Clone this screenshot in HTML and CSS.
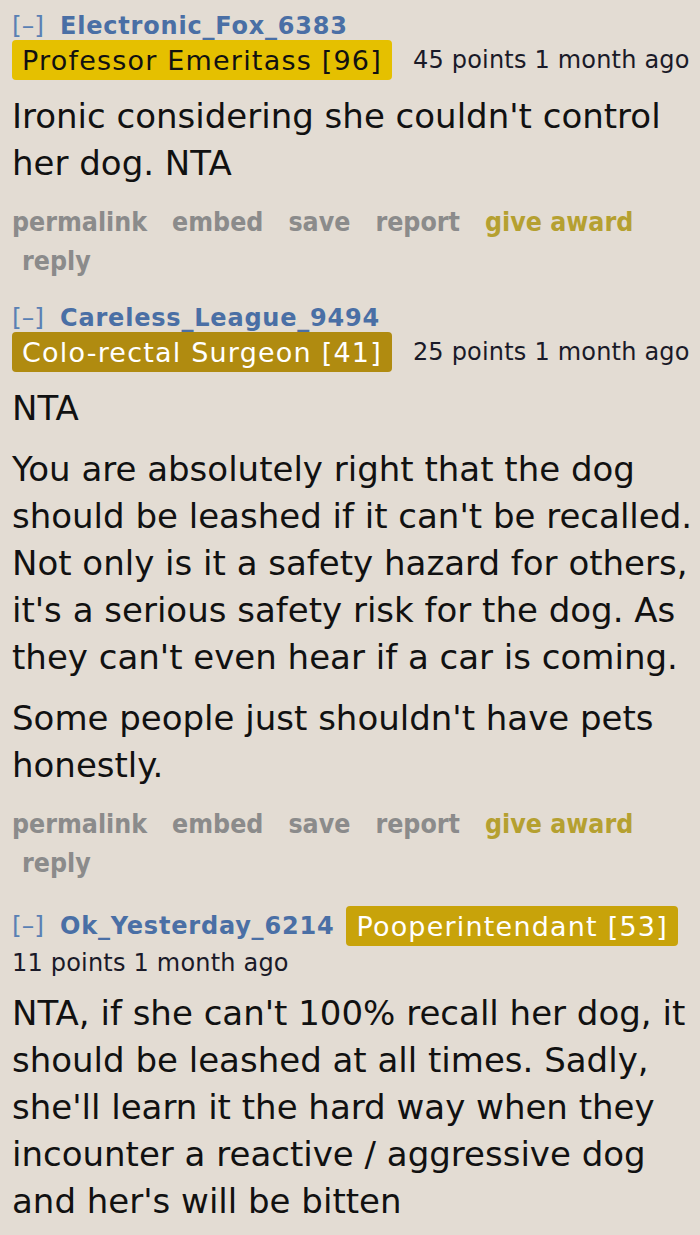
FILE: index.html
```html
<!DOCTYPE html>
<html>
<head>
<meta charset="utf-8">
<link rel="stylesheet" href="styles.css">
</head>
<body>
<div class="comment">
  <div class="tagline">
    <span class="who"><span class="expand">[–]</span><span class="author">Electronic_Fox_6383</span></span>
    <span class="flair flair-yellow">Professor Emeritass [96]</span>
    <span class="score">45 points 1 month ago</span>
  </div>
  <div class="md">
    <p>Ironic considering she couldn't control her dog. NTA</p>
  </div>
  <ul class="buttons">
    <li>permalink</li><li>embed</li><li>save</li><li>report</li><li class="award">give award</li><li class="reply">reply</li>
  </ul>
</div>
<div class="comment">
  <div class="tagline">
    <span class="who"><span class="expand">[–]</span><span class="author">Careless_League_9494</span></span>
    <span class="flair flair-dark">Colo-rectal Surgeon [41]</span>
    <span class="score">25 points 1 month ago</span>
  </div>
  <div class="md">
    <p>NTA</p>
    <p>You are absolutely right that the dog should be leashed if it can't be recalled. Not only is it a safety hazard for others, it's a serious safety risk for the dog. As they can't even hear if a car is coming.</p>
    <p>Some people just shouldn't have pets honestly.</p>
  </div>
  <ul class="buttons">
    <li>permalink</li><li>embed</li><li>save</li><li>report</li><li class="award">give award</li><li class="reply">reply</li>
  </ul>
</div>
<div class="comment">
  <div class="tagline">
    <span class="who"><span class="expand">[–]</span><span class="author">Ok_Yesterday_6214</span></span>
    <span class="flair flair-gold">Pooperintendant [53]</span>
    <span class="score">11 points 1 month ago</span>
  </div>
  <div class="md">
    <p>NTA, if she can't 100% recall her dog, it should be leashed at all times. Sadly, she'll learn it the hard way when they incounter a reactive / aggressive dog and her's will be bitten</p>
  </div>
</div>
</body>
</html>
```

FILE: styles.css
```css
html, body {
  margin: 0;
  padding: 0;
  background: #e3dcd3;
}
body {
  padding: 12px 4px 0 12px;
  font-family: "DejaVu Sans", Verdana, sans-serif;
  color: #111;
}
.comment {
  margin-bottom: 24px;
}
.tagline {
  display: flex;
  flex-wrap: wrap;
  align-items: center;
  column-gap: 12px;
  row-gap: 0;
}
.who {
  font-size: 24px;
  line-height: 28px;
  color: #4a6fa5;
  white-space: nowrap;
}
.expand {
  font-weight: normal;
  font-size: 25px;
  color: #5a80b4;
  margin-right: 16px;
}
.author {
  font-weight: bold;
  letter-spacing: 0.8px;
}
.flair {
  font-size: 27px;
  letter-spacing: 1.2px;
  line-height: 38px;
  padding: 2px 10px 0 10px;
  border-radius: 4px;
  margin-right: 9px;
  white-space: nowrap;
}
.flair-yellow {
  background: #e5c000;
  color: #111;
}
.flair-dark {
  background: #b08b10;
  color: #fff;
}
.flair-gold {
  background: #c8a30a;
  color: #fff;
}
.score {
  font-size: 24px;
  line-height: 28px;
  letter-spacing: 0.2px;
  color: #1a1a28;
  white-space: nowrap;
}
.comment:last-child .tagline {
  row-gap: 3px;
}
.md {
  font-size: 34px;
  line-height: 47px;
  margin-top: 13px;
}
.md p {
  margin: 0 0 14px 0;
}
.md p:last-child {
  margin-bottom: 0;
}
.buttons {
  list-style: none;
  margin: 15px 0 0 0;
  padding: 0;
  display: flex;
  flex-wrap: wrap;
  column-gap: 25px;
  row-gap: 0;
  font-size: 26.5px;
  line-height: 39px;
  font-weight: bold;
  font-stretch: condensed;
  color: #8b8b8b;
}
.buttons .reply {
  padding-left: 10px;
}
.buttons .award {
  color: #b5a030;
}
```
